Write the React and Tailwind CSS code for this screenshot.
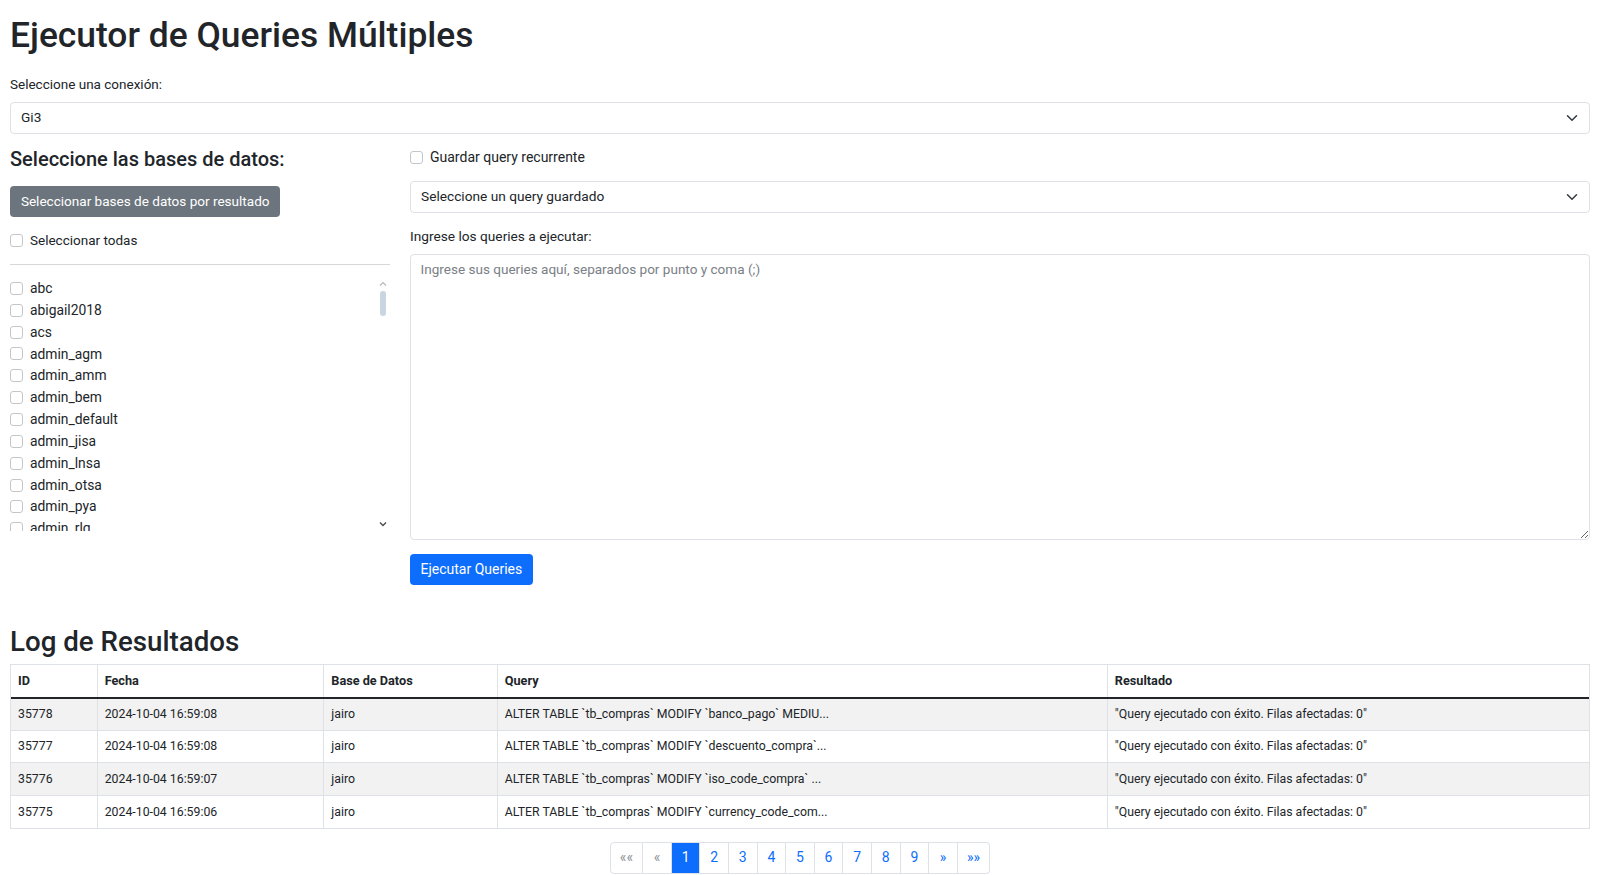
import React from "react";

const FONT = { fontFamily: "Roboto, 'Noto Sans', 'DejaVu Sans', sans-serif" };

const dbs = [
  "abc",
  "abigail2018",
  "acs",
  "admin_agm",
  "admin_amm",
  "admin_bem",
  "admin_default",
  "admin_jisa",
  "admin_lnsa",
  "admin_otsa",
  "admin_pya",
  "admin_rlg",
];

const rows = [
  ["35778", "2024-10-04 16:59:08", "jairo", "ALTER TABLE `tb_compras` MODIFY `banco_pago` MEDIU..."],
  ["35777", "2024-10-04 16:59:08", "jairo", "ALTER TABLE `tb_compras` MODIFY `descuento_compra`..."],
  ["35776", "2024-10-04 16:59:07", "jairo", "ALTER TABLE `tb_compras` MODIFY `iso_code_compra` ..."],
  ["35775", "2024-10-04 16:59:06", "jairo", "ALTER TABLE `tb_compras` MODIFY `currency_code_com..."],
];

function Box() {
  return (
    <span className="inline-block w-[13px] h-[13px] border border-[#c4c7ca] rounded-[3px] bg-white shrink-0" />
  );
}

function Chevron() {
  return (
    <svg width="12" height="12" viewBox="0 0 16 16" fill="none" stroke="#343a40" strokeWidth="2" strokeLinecap="round" strokeLinejoin="round">
      <path d="m2 5 6 6 6-6" />
    </svg>
  );
}

function Select({ children }) {
  return (
    <div className="h-[31.5px] border border-[#dee2e6] rounded-[4px] pl-[10px] pr-[11px] flex items-center justify-between text-[13.7px] bg-white">
      <span>{children}</span>
      <Chevron />
    </div>
  );
}

const pages = [
  { t: "««", w: "w-[33.7px]", c: "text-[#8c9196]" },
  { t: "«", w: "w-[28.5px]", c: "text-[#8c9196]" },
  { t: "1", w: "w-[28.6px]", c: "text-white bg-[#0d6efd] border-[#0d6efd]" },
  { t: "2", w: "w-[28.6px]", c: "text-[#0d6efd]" },
  { t: "3", w: "w-[28.6px]", c: "text-[#0d6efd]" },
  { t: "4", w: "w-[28.6px]", c: "text-[#0d6efd]" },
  { t: "5", w: "w-[28.6px]", c: "text-[#0d6efd]" },
  { t: "6", w: "w-[28.6px]", c: "text-[#0d6efd]" },
  { t: "7", w: "w-[28.6px]", c: "text-[#0d6efd]" },
  { t: "8", w: "w-[28.6px]", c: "text-[#0d6efd]" },
  { t: "9", w: "w-[28.6px]", c: "text-[#0d6efd]" },
  { t: "»", w: "w-[28.6px]", c: "text-[#0d6efd]" },
  { t: "»»", w: "w-[32.7px]", c: "text-[#0d6efd]" },
];

export default function App() {
  return (
    <div className="px-[10px] pt-[11px] text-[#212529] bg-white" style={FONT}>
      <h1 className="text-[35.4px] leading-[48px] font-medium">Ejecutor de Queries Múltiples</h1>
      <div className="mt-[15px] text-[13.5px] leading-[21px]">Seleccione una conexión:</div>
      <div className="mt-[7px]">
        <Select>Gi3</Select>
      </div>

      <div className="mt-[13px] flex gap-[20px]">
        <div className="w-[380px] shrink-0">
          <h5 className="text-[20px] leading-[24px] font-medium">Seleccione las bases de datos:</h5>
          <button className="mt-[15px] h-[31.5px] w-[270.4px] bg-[#6c757d] text-white text-[13.55px] rounded-[4px] block text-center">
            Seleccionar bases de datos por resultado
          </button>
          <label className="mt-[13px] flex items-center gap-[7px] h-[21px] text-[13.5px]">
            <Box />
            <span>Seleccionar todas</span>
          </label>
          <div className="mt-[13px] border-t border-[#d6d8da]" />
          <div className="mt-[12.5px] relative h-[253px] overflow-hidden">
            <div className="pr-[14px]">
              {dbs.map((d) => (
                <label key={d} className="flex items-center gap-[7px] h-[21.85px] text-[13.85px]">
                  <Box />
                  <span>{d}</span>
                </label>
              ))}
            </div>
            <div className="absolute right-0 top-0 w-[14px] h-full">
              <svg className="absolute left-[3px] top-[3px]" width="8" height="6" viewBox="0 0 8 6" fill="none" stroke="#b5b9bd" strokeWidth="1.2">
                <path d="M1 4.5 4 1.5 7 4.5" />
              </svg>
              <div className="absolute left-[3.5px] top-[13px] w-[6px] h-[25px] rounded-[3px] bg-[#c9d5e0]" />
              <svg className="absolute left-[3px] top-[243px]" width="8" height="6" viewBox="0 0 8 6" fill="none" stroke="#4a4f54" strokeWidth="1.4">
                <path d="M1 1.5 4 4.5 7 1.5" />
              </svg>
            </div>
          </div>
        </div>

        <div className="flex-1 min-w-0">
          <label className="mt-[0.5px] flex items-center gap-[7px] h-[21px] text-[14px]">
            <Box />
            <span>Guardar query recurrente</span>
          </label>
          <div className="mt-[13px]">
            <Select>Seleccione un query guardado</Select>
          </div>
          <div className="mt-[13px] text-[13.7px] leading-[21px]">Ingrese los queries a ejecutar:</div>
          <textarea
            className="mt-[7px] block w-full h-[286px] border border-[#dee2e6] rounded-[4px] pl-[9.5px] pr-[9px] pt-[4px] text-[13.55px] leading-[21px] placeholder:text-[#7b8086] outline-none"
            style={FONT}
            placeholder="Ingrese sus queries aquí, separados por punto y coma (;)"
          />
          <button className="mt-[14px] h-[31.5px] w-[122.7px] bg-[#0d6efd] text-white text-[14px] rounded-[4px] block">
            Ejecutar Queries
          </button>
        </div>
      </div>

      <h2 className="mt-[38px] text-[27.7px] leading-[38px] font-medium">Log de Resultados</h2>

      <div className="mt-[3px] border border-[#dee2e6] text-[12.3px]">
        <div className="grid grid-cols-[86.7px_226.6px_173.4px_610.2px_1fr] h-[33.5px] border-b-2 border-[#212529] font-bold text-[12.7px]">
          {["ID", "Fecha", "Base de Datos", "Query", "Resultado"].map((h, i) => (
            <div key={h} className={"px-[7px] flex items-center " + (i < 4 ? "border-r border-[#dee2e6]" : "")}>
              {h}
            </div>
          ))}
        </div>
        {rows.map((r, ri) => (
          <div
            key={r[0]}
            className={
              "grid grid-cols-[86.7px_226.6px_173.4px_610.2px_1fr] h-[32.4px] " +
              (ri % 2 === 0 ? "bg-[#f2f2f2] " : "bg-white ") +
              (ri < rows.length - 1 ? "border-b border-[#dee2e6]" : "")
            }
          >
            {[...r, "\"Query ejecutado con éxito. Filas afectadas: 0\""].map((c, i) => (
              <div key={i} className={"px-[7px] flex items-center whitespace-nowrap " + (i < 4 ? "border-r border-[#dee2e6]" : "")}>
                {c}
              </div>
            ))}
          </div>
        ))}
      </div>

      <div className="mt-[13px] flex justify-center">
        <div className="flex">
          {pages.map((p, i) => (
            <div
              key={i}
              className={
                "h-[31.7px] flex items-center justify-center text-[14px] border-y border-r border-[#dee2e6] " +
                p.w +
                " " +
                p.c +
                (i === 0 ? " border-l rounded-l-[4px]" : "") +
                (i === pages.length - 1 ? " rounded-r-[4px]" : "")
              }
            >
              {p.t}
            </div>
          ))}
        </div>
      </div>
    </div>
  );
}
